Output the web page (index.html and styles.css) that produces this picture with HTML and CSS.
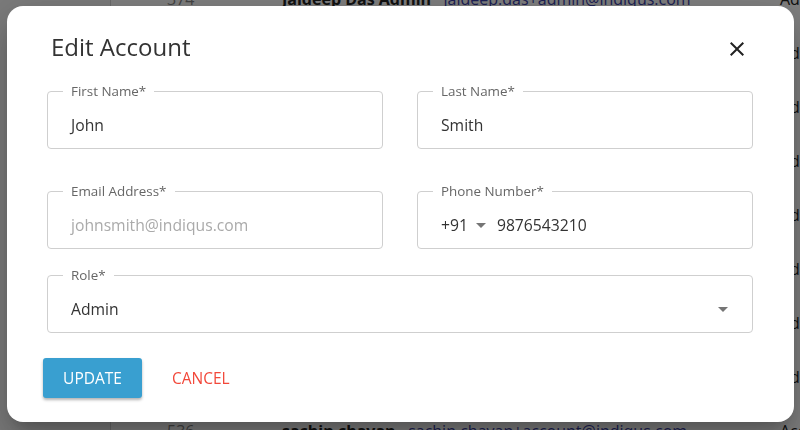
FILE: index.html
```html
<!DOCTYPE html>
<html lang="en">
<head>
<meta charset="utf-8">
<title>Edit Account</title>
<link rel="stylesheet" href="styles.css">
</head>
<body>
<div class="page">
  <aside class="sidebar"></aside>
  <main class="table">
    <div class="row"><span class="id">374</span><span class="who"><b>Jaideep Das Admin</b><span class="mail"> · jaideep.das+admin@indiqus.com</span></span><span class="role">Admin</span></div>
    <div class="row"><span class="id">375</span><span class="who"><b>Ravi Kumar</b><span class="mail"> · ravi.kumar@indiqus.com</span></span><span class="role">Admin</span></div>
    <div class="row"><span class="id">376</span><span class="who"><b>Amit Shah</b><span class="mail"> · amit.shah@indiqus.com</span></span><span class="role">Admin</span></div>
    <div class="row"><span class="id">377</span><span class="who"><b>Neha Patil</b><span class="mail"> · neha.patil@indiqus.com</span></span><span class="role">Admin</span></div>
    <div class="row"><span class="id">378</span><span class="who"><b>Rahul Jain</b><span class="mail"> · rahul.jain@indiqus.com</span></span><span class="role">Admin</span></div>
    <div class="row"><span class="id">379</span><span class="who"><b>Priya Nair</b><span class="mail"> · priya.nair@indiqus.com</span></span><span class="role">Admin</span></div>
    <div class="row"><span class="id">380</span><span class="who"><b>Sunil Rao</b><span class="mail"> · sunil.rao@indiqus.com</span></span><span class="role">Admin</span></div>
    <div class="row"><span class="id">381</span><span class="who"><b>Kiran Desai</b><span class="mail"> · kiran.desai@indiqus.com</span></span><span class="role">Admin</span></div>
    <div class="row"><span class="id">536</span><span class="who"><b>sachin chavan</b><span class="mail"> · sachin.chavan+account@indiqus.com</span></span><span class="role">Account</span></div>
  </main>
</div>

<div class="overlay"></div>

<div class="dialog">
  <header class="dialog-head">
    <h2 class="dialog-title">Edit Account</h2>
    <button class="close" aria-label="Close">
      <svg width="24" height="24" viewBox="0 0 24 24"><path d="M19 6.41L17.59 5 12 10.59 6.41 5 5 6.41 10.59 12 5 17.59 6.41 19 12 13.41 17.59 19 19 17.59 13.41 12z"/></svg>
    </button>
  </header>

  <form class="form">
    <div class="grid row-1">
      <fieldset class="field"><legend>First Name*</legend><div class="value">John</div></fieldset>
      <fieldset class="field"><legend>Last Name*</legend><div class="value">Smith</div></fieldset>
    </div>
    <div class="grid row-2">
      <fieldset class="field"><legend>Email Address*</legend><div class="value placeholder">johnsmith@indiqus.com</div></fieldset>
      <fieldset class="field"><legend>Phone Number*</legend>
        <div class="value phone"><span>+91</span><svg class="caret-sm" width="10" height="5" viewBox="0 0 10 5"><path d="M0 0h10L5 5z"/></svg><span>9876543210</span></div>
      </fieldset>
    </div>
    <fieldset class="field wide"><legend>Role*</legend>
      <div class="value select"><span>Admin</span><svg class="caret" width="24" height="24" viewBox="0 0 24 24"><path d="M7 10l5 5 5-5z"/></svg></div>
    </fieldset>

    <div class="actions">
      <button type="button" class="btn primary">UPDATE</button>
      <button type="button" class="btn text">CANCEL</button>
    </div>
  </form>
</div>
</body>
</html>
```

FILE: styles.css
```css
* { box-sizing: border-box; }

html, body {
  margin: 0;
  height: 100%;
  overflow: hidden;
}

body {
  background: #fff;
  font-family: "Open Sans", "Liberation Sans", sans-serif;
  color: #333;
}

/* background page */
.page {
  display: flex;
  height: 430px;
  overflow: hidden;
}

.sidebar {
  width: 111px;
  flex: none;
  background: #f7f7f7;
  border-right: 1px solid #d6d6d6;
}

.table {
  flex: 1;
  display: flex;
  flex-direction: column;
  margin-top: -28px;
}

.row {
  height: 54px;
  flex: none;
  display: flex;
  align-items: center;
  font-size: 16px;
  white-space: nowrap;
}

.id {
  width: 171px;
  padding-left: 56px;
  color: #888;
}

.who {
  width: 498px;
  color: #222;
}

.who b { font-weight: 700; }

.mail { color: #3a3fa8; }

.role { color: #222; }

.overlay {
  position: fixed;
  inset: 0;
  background: rgba(0, 0, 0, 0.5);
}

/* dialog */
.dialog {
  position: fixed;
  left: 7px;
  top: 6px;
  width: 787px;
  height: 416px;
  background: #fff;
  border-radius: 16px;
  box-shadow: 0 11px 15px -7px rgba(0,0,0,.2), 0 24px 38px 3px rgba(0,0,0,.14), 0 9px 46px 8px rgba(0,0,0,.12);
}

.dialog-head {
  display: flex;
  align-items: center;
  justify-content: space-between;
  padding: 26px 45px 0 44px;
}

.dialog-title {
  margin: 0;
  font-size: 24px;
  line-height: 30px;
  font-weight: 400;
  color: #333;
}

.close {
  border: 0;
  padding: 0;
  background: none;
  width: 24px;
  height: 24px;
  margin-top: 4px;
  display: flex;
}

.close svg { fill: #222; }

.form {
  display: flex;
  flex-direction: column;
  padding: 0 41px 0 40px;
  margin-top: 21px;
}

.grid {
  display: grid;
  grid-template-columns: 1fr 1fr;
  column-gap: 34px;
}

.row-1 { margin-bottom: 34px; }
.row-2 { margin-bottom: 18px; }

.field {
  margin: 0;
  padding: 0 15px;
  border: 1px solid #cfcfcf;
  border-radius: 4px;
  min-width: 0;
}

.field legend {
  padding: 0 8px;
  font-size: 13.4px;
  line-height: 16px;
  color: #666;
}

.value {
  height: 49px;
  padding: 3px 8px 0;
  display: flex;
  align-items: center;
  font-size: 15.7px;
  color: #333;
}

.placeholder { color: #aaa; }

.caret-sm {
  fill: #757575;
  margin: 0 11px 0 8px;
}

.select {
  justify-content: space-between;
  padding-right: 0;
}

.caret {
  fill: #757575;
  margin-right: 2px;
}

.actions {
  display: flex;
  align-items: center;
  gap: 10px;
  margin-top: 25px;
  margin-left: -4px;
}

.btn {
  height: 40px;
  padding: 0 20px;
  border: 0;
  border-radius: 3px;
  font-family: "Open Sans", "Liberation Sans", sans-serif;
  font-size: 15.5px;
  background: none;
}

.primary {
  width: 99px;
  background: #399fd0;
  color: #fff;
  box-shadow: 0 2px 3px rgba(0,0,0,.3);
}

.text {
  color: #f2483a;
}
```
